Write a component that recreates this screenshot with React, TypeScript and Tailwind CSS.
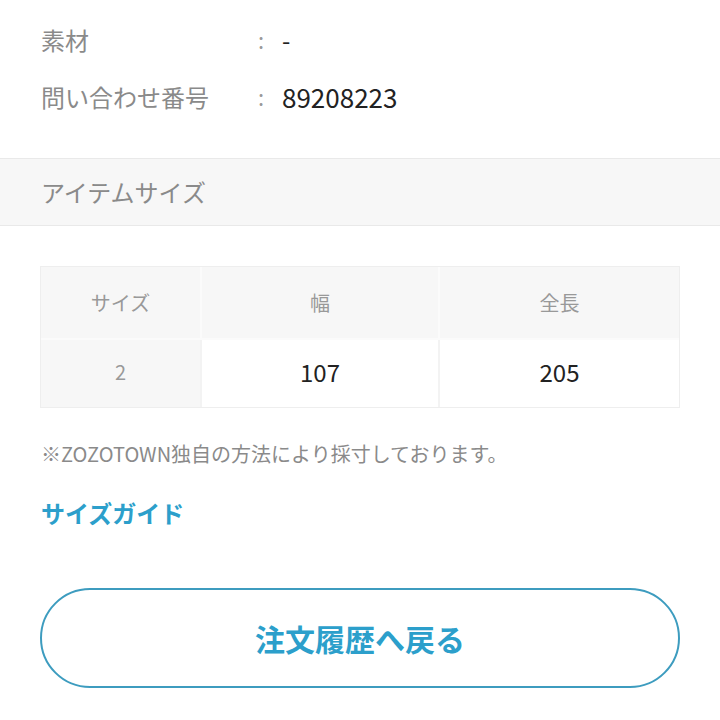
import React from 'react'

const font = { fontFamily: '"Noto Sans CJK JP", "Noto Sans", sans-serif' }

function InfoRow({ label, value, big }: { label: string; value: string; big?: boolean }) {
  return (
    <div className="flex items-center h-[57px]">
      <span className="w-[217px] text-[24px] text-[#8a8a8a]">{label}</span>
      <span className="w-[24px] text-[22px] text-[#9a9a9a]">:</span>
      <span className={big ? 'text-[26px] text-[#222]' : 'text-[24px] text-[#222]'}>{value}</span>
    </div>
  )
}

export default function App() {
  return (
    <div className="w-[720px] h-[720px] bg-white overflow-hidden" style={font}>
      <div className="pl-[41px] pt-[11px]">
        <InfoRow label="素材" value="-" />
        <InfoRow label="問い合わせ番号" value="89208223" big />
      </div>

      <div className="mt-[33px] h-[68px] flex items-center pl-[41px] bg-[#f7f7f7] border-y border-[#e9e9e9]">
        <span className="text-[24px] text-[#8a8a8a]">アイテムサイズ</span>
      </div>

      <div className="mx-10 mt-[40px] border border-[#eeeeee]">
        <div className="grid grid-cols-[161px_238px_239px] h-[71px] bg-[#f7f7f7]">
          <div className="flex items-center justify-center text-[20px] text-[#999] border-r-2 border-[#fbfbfb]">サイズ</div>
          <div className="flex items-center justify-center text-[20px] text-[#999] border-r-2 border-[#fbfbfb]">幅</div>
          <div className="flex items-center justify-center text-[20px] text-[#999]">全長</div>
        </div>
        <div className="grid grid-cols-[161px_238px_239px] h-[69px] border-t-2 border-[#fbfbfb]">
          <div className="flex items-center justify-center pb-[4px] text-[20px] text-[#999] bg-[#f7f7f7] border-r-2 border-[#f3f3f3]">2</div>
          <div className="flex items-center justify-center pb-[4px] text-[24px] text-[#222] border-r-2 border-[#f3f3f3]">107</div>
          <div className="flex items-center justify-center pb-[4px] text-[24px] text-[#222]">205</div>
        </div>
      </div>

      <p className="mt-[31px] pl-[41px] text-[20px] leading-[30px] text-[#8a8a8a]">
        ※ZOZOTOWN独自の方法により採寸しております。
      </p>

      <p className="mt-[27px] pl-[41px] text-[24px] leading-[34px] font-bold text-[#2c9fcb]">サイズガイド</p>

      <div className="mx-10 mt-[58px] h-[100px] rounded-full border-2 border-[#3d9cbf] flex items-center justify-center">
        <span className="text-[30px] font-bold text-[#2c9fcb]">注文履歴へ戻る</span>
      </div>
    </div>
  )
}
